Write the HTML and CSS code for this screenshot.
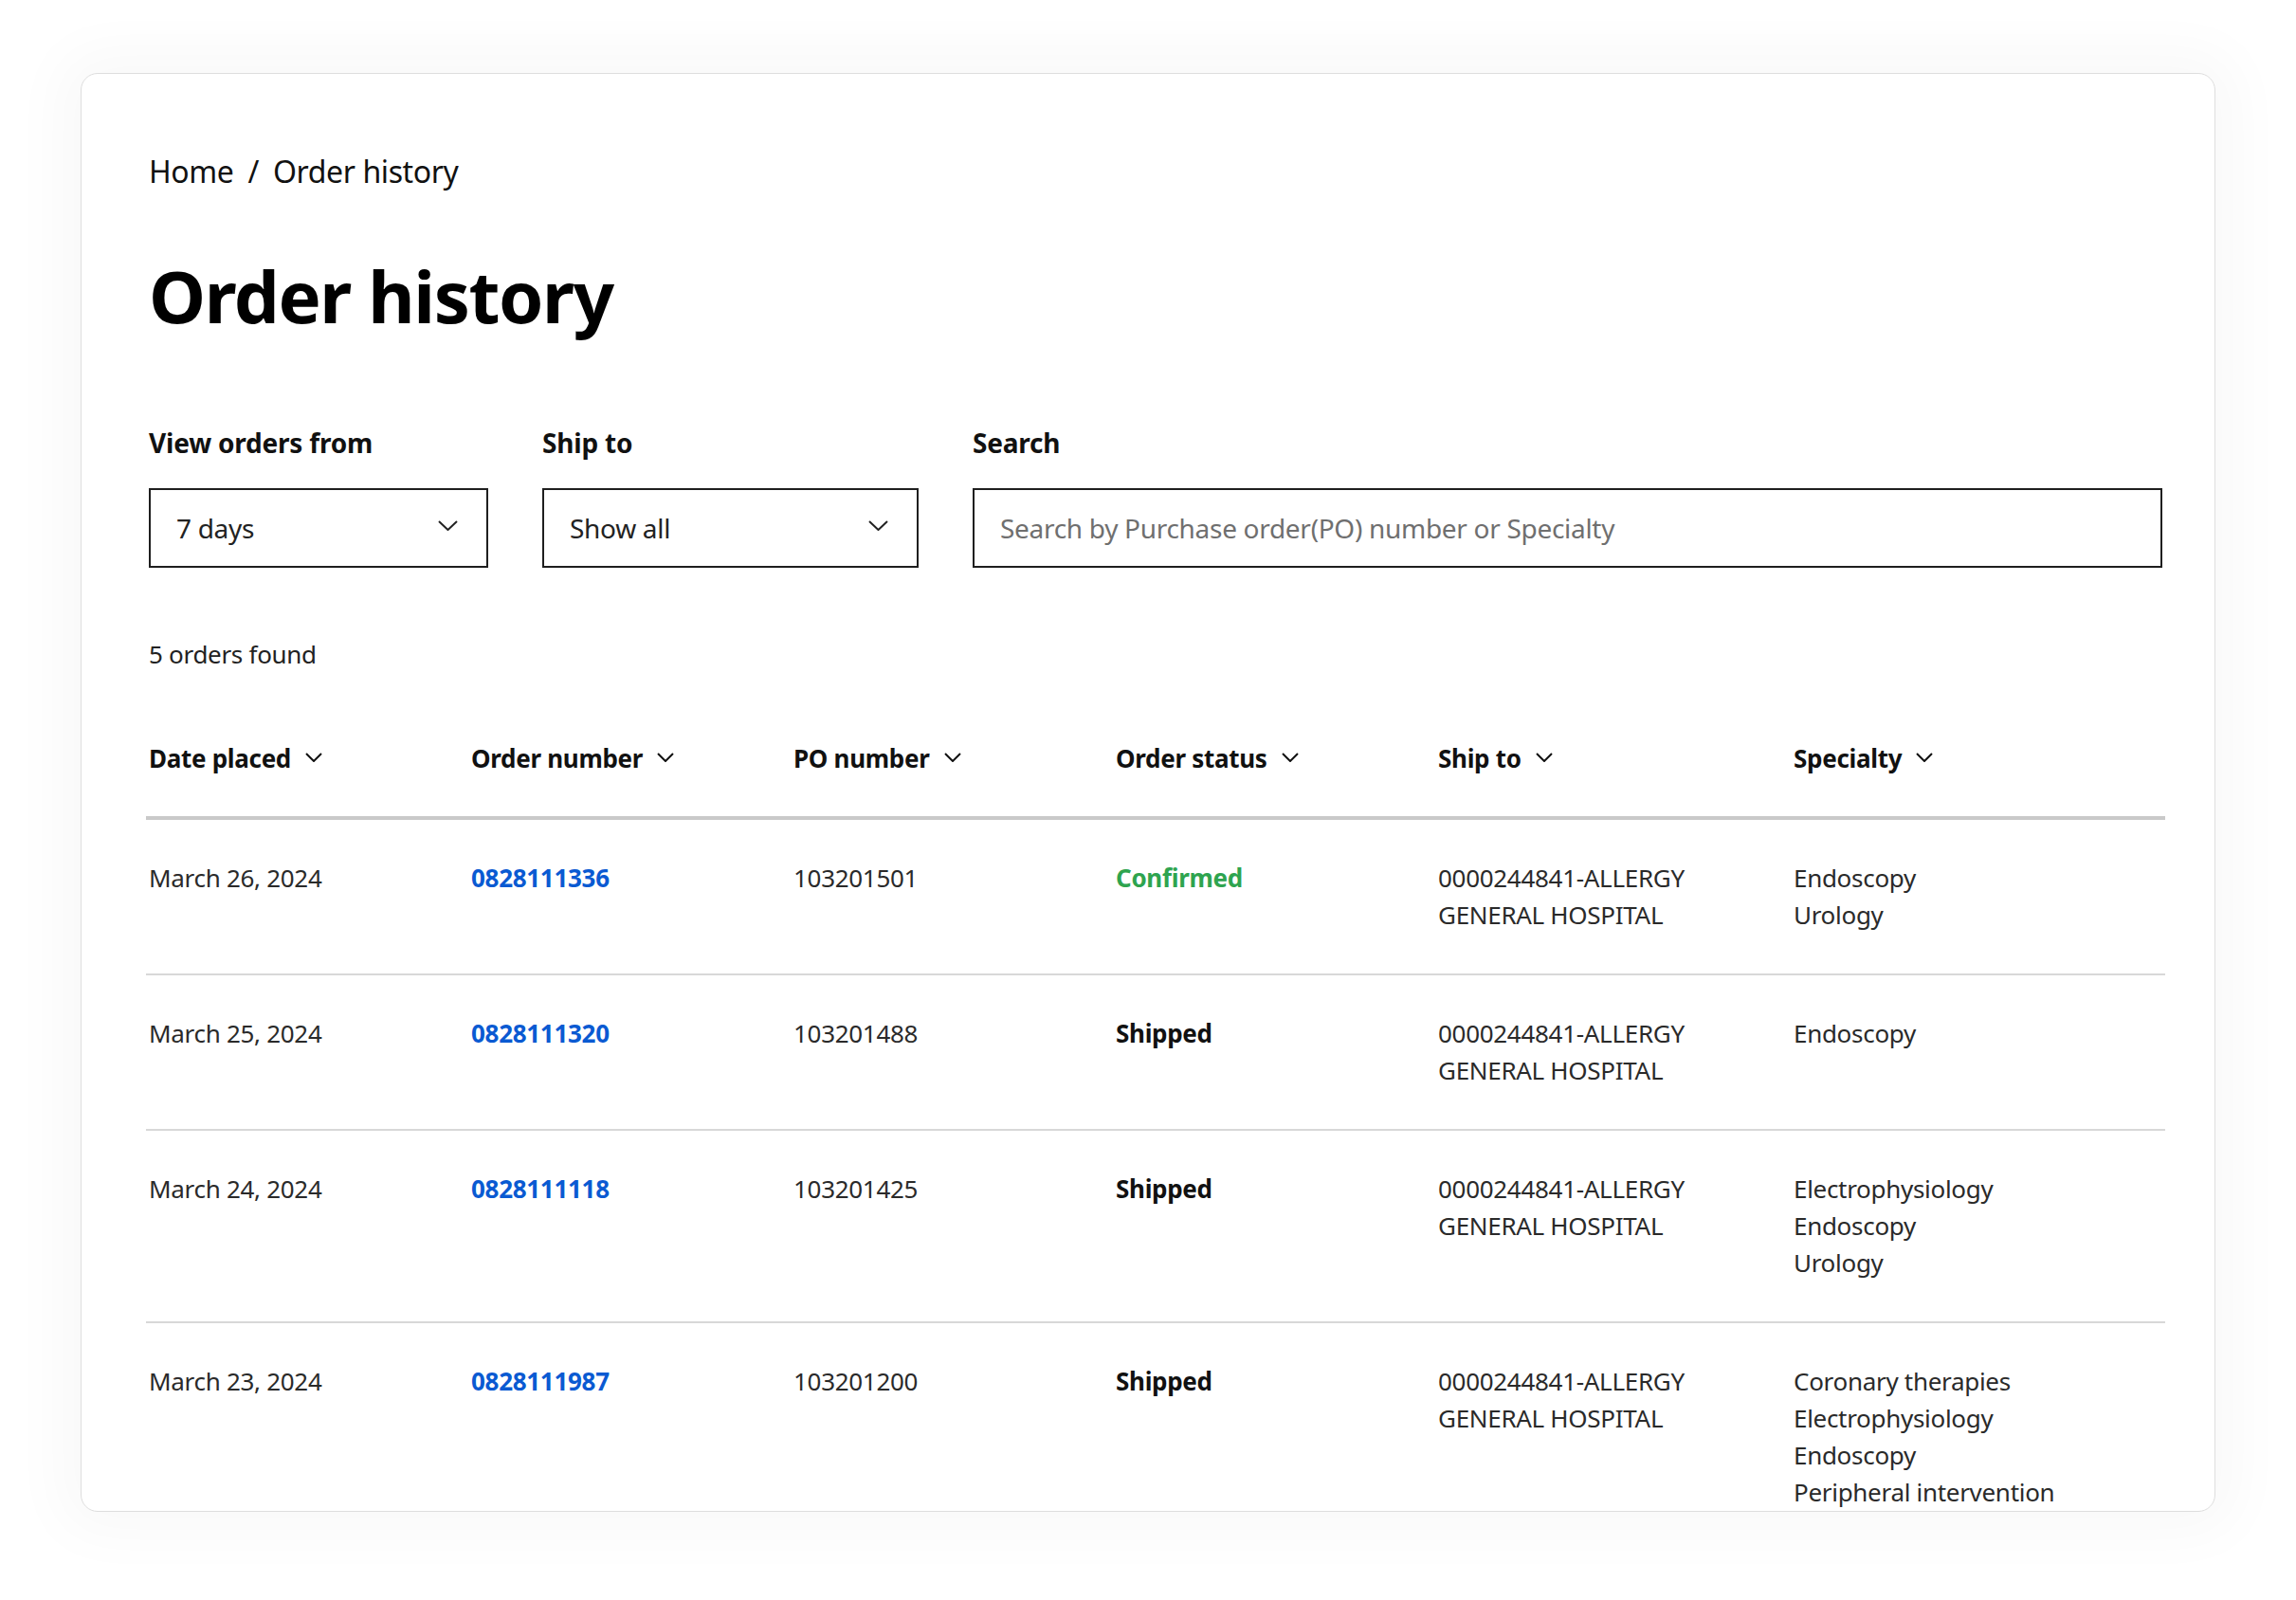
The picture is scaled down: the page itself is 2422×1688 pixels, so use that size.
FILE: index.html
```html
<!DOCTYPE html>
<html lang="en">
<head>
<meta charset="utf-8">
<title>Order history</title>
<link rel="stylesheet" href="styles.css">
</head>
<body>
<div class="card">
  <div class="content">
    <nav class="breadcrumb">
      <span>Home</span><span class="sep">/</span><span>Order history</span>
    </nav>
    <h1 class="title">Order history</h1>

    <div class="filters">
      <div class="field">
        <label class="label">View orders from</label>
        <div class="box select">
          <span>7 days</span>
          <svg class="chev-lg" viewBox="0 0 21 11" width="21" height="11"><path d="M1 1 L10.5 10 L20 1" fill="none" stroke="#222" stroke-width="2"/></svg>
        </div>
      </div>
      <div class="field">
        <label class="label">Ship to</label>
        <div class="box select">
          <span>Show all</span>
          <svg class="chev-lg" viewBox="0 0 21 11" width="21" height="11"><path d="M1 1 L10.5 10 L20 1" fill="none" stroke="#222" stroke-width="2"/></svg>
        </div>
      </div>
      <div class="field">
        <label class="label">Search</label>
        <div class="box search">
          <span class="placeholder">Search by Purchase order(PO) number or Specialty</span>
        </div>
      </div>
    </div>

    <p class="count">5 orders found</p>

    <div class="table">
      <div class="row head">
        <div class="th">Date placed<svg viewBox="0 0 18 10" width="18" height="10"><path d="M1 1 L9 9 L17 1" fill="none" stroke="#111" stroke-width="2"/></svg></div>
        <div class="th">Order number<svg viewBox="0 0 18 10" width="18" height="10"><path d="M1 1 L9 9 L17 1" fill="none" stroke="#111" stroke-width="2"/></svg></div>
        <div class="th">PO number<svg viewBox="0 0 18 10" width="18" height="10"><path d="M1 1 L9 9 L17 1" fill="none" stroke="#111" stroke-width="2"/></svg></div>
        <div class="th">Order status<svg viewBox="0 0 18 10" width="18" height="10"><path d="M1 1 L9 9 L17 1" fill="none" stroke="#111" stroke-width="2"/></svg></div>
        <div class="th">Ship to<svg viewBox="0 0 18 10" width="18" height="10"><path d="M1 1 L9 9 L17 1" fill="none" stroke="#111" stroke-width="2"/></svg></div>
        <div class="th">Specialty<svg viewBox="0 0 18 10" width="18" height="10"><path d="M1 1 L9 9 L17 1" fill="none" stroke="#111" stroke-width="2"/></svg></div>
      </div>

      <div class="row">
        <div>March 26, 2024</div>
        <div><a class="link">0828111336</a></div>
        <div>103201501</div>
        <div class="status confirmed">Confirmed</div>
        <div>0000244841-ALLERGY<br>GENERAL HOSPITAL</div>
        <div>Endoscopy<br>Urology</div>
      </div>

      <div class="row">
        <div>March 25, 2024</div>
        <div><a class="link">0828111320</a></div>
        <div>103201488</div>
        <div class="status">Shipped</div>
        <div>0000244841-ALLERGY<br>GENERAL HOSPITAL</div>
        <div>Endoscopy</div>
      </div>

      <div class="row">
        <div>March 24, 2024</div>
        <div><a class="link">0828111118</a></div>
        <div>103201425</div>
        <div class="status">Shipped</div>
        <div>0000244841-ALLERGY<br>GENERAL HOSPITAL</div>
        <div>Electrophysiology<br>Endoscopy<br>Urology</div>
      </div>

      <div class="row">
        <div>March 23, 2024</div>
        <div><a class="link">0828111987</a></div>
        <div>103201200</div>
        <div class="status">Shipped</div>
        <div>0000244841-ALLERGY<br>GENERAL HOSPITAL</div>
        <div>Coronary therapies<br>Electrophysiology<br>Endoscopy<br>Peripheral intervention</div>
      </div>
    </div>
  </div>
</div>
</body>
</html>
```

FILE: styles.css
```css
* { box-sizing: border-box; }

html, body {
  margin: 0;
  padding: 0;
  background: #ffffff;
}

body {
  font-family: "Noto Sans", "Open Sans", sans-serif;
  color: #222;
  width: 2422px;
  height: 1688px;
  overflow: hidden;
}

.card {
  margin: 77px 0 0 85px;
  width: 2252px;
  height: 1518px;
  background: #fff;
  border: 1px solid #dedede;
  border-radius: 18px;
  overflow: hidden;
  padding: 81px 0 0 71px;
  box-shadow: 0 0 60px 24px rgba(0, 0, 0, 0.028);
}

.content {
  width: 2124px;
}

.breadcrumb {
  display: flex;
  align-items: baseline;
  font-size: 32px;
  line-height: 44px;
  height: 44px;
  color: #111;
  letter-spacing: -0.4px;
}

.breadcrumb .sep {
  margin: 0 15px;
}

.title {
  margin: 64px 0 0;
  font-size: 76px;
  line-height: 90px;
  font-weight: 700;
  color: #000;
  letter-spacing: -1.4px;
}

.filters {
  margin-top: 92px;
  display: grid;
  grid-template-columns: 358px 397px 1fr;
  column-gap: 57px;
}

.field {
  display: flex;
  flex-direction: column;
  gap: 30px;
}

.label {
  font-size: 28px;
  line-height: 36px;
  font-weight: 700;
  color: #111;
  letter-spacing: -0.2px;
}

.box {
  height: 84px;
  border: 2px solid #1f1f1f;
  display: flex;
  align-items: center;
  padding: 0 30px 0 27px;
  font-size: 28px;
  color: #222;
  letter-spacing: -0.3px;
}

.select {
  justify-content: space-between;
}

.chev-lg {
  display: block;
  margin-top: -6px;
}

.placeholder {
  color: #6f6f6f;
}

.count {
  margin: 72px 0 0;
  font-size: 26px;
  line-height: 39px;
  color: #222;
  letter-spacing: -0.3px;
}

.table {
  margin: 71px -3px 0;
}

.row {
  display: grid;
  grid-template-columns: 340px 340px 340px 340px 375px 1fr;
  padding: 42px 3px 42px;
  border-bottom: 2px solid #d8d8d8;
  font-size: 26px;
  line-height: 39px;
  color: #2a2a2a;
  letter-spacing: -0.3px;
}

.row.head {
  padding: 0 3px 41px;
  border-bottom: 4px solid #c9c9c9;
}

.th {
  display: flex;
  align-items: center;
  gap: 15px;
  font-weight: 700;
  color: #111;
}

.th svg {
  display: block;
  margin-top: -4px;
}

.link {
  color: #0a5ad2;
  font-weight: 700;
  text-decoration: none;
}

.status {
  font-weight: 700;
  color: #111;
}

.status.confirmed {
  color: #2ea44f;
}
```
